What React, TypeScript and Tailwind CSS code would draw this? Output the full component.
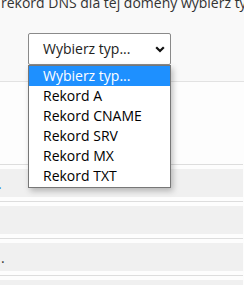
import React from "react";

const options = ["Wybierz typ...", "Rekord A", "Rekord CNAME", "Rekord SRV", "Rekord MX", "Rekord TXT"];

function Row({ mark }: { mark?: React.ReactNode }) {
  return (
    <div className="flex flex-col">
      <div className="h-px bg-[#dddddd] w-[243px]" />
      <div className="h-[4px]" />
      <div className="h-[28px] w-[243px] bg-[#f0f0f0] flex items-center text-[14px] leading-[20px] overflow-hidden">{mark}</div>
      <div className="h-[4px]" />
    </div>
  );
}

export default function App() {
  return (
    <div className="relative w-[244px] h-[285px] overflow-hidden bg-[#fdfdfd] font-['Open_Sans',sans-serif]">
      <div className="h-[81px] bg-[#f9f9f9] overflow-hidden">
        <p className="whitespace-nowrap text-[14px] leading-[20px] text-[#333333] -mt-[7px] pl-px">
          rekord DNS dla tej domeny wybierz typ rekordu
        </p>
        <div className="ml-[28px] mt-[20px] w-[143px] h-[32px] bg-white border border-[#8a8a8a] rounded-[2px] flex items-center justify-between pl-[14px] pr-[5px]">
          <span className="text-[14px] text-[#222222] leading-[20px]">Wybierz typ...</span>
          <svg width="10" height="7" viewBox="0 0 10 7">
            <path d="M1.2 1.2 L5 5 L8.8 1.2" fill="none" stroke="#111" strokeWidth="2.2" />
          </svg>
        </div>
      </div>
      <div className="h-px bg-[#e2e2e2]" />
      <div className="h-[82px]" />
      <Row mark={<span className="text-[#2a7ae2] -ml-[2px] mt-[2px]">.</span>} />
      <Row />
      <Row mark={<span className="text-[#333] ml-[1px] mt-[2px]">.</span>} />
      <Row />

      <div className="absolute left-[28px] top-[65px] w-[143px] h-[123px] bg-white border border-[#777777] shadow-[2px_3px_6px_rgba(0,0,0,0.25)] flex flex-col">
        {options.map((o, i) => (
          <div
            key={o}
            className={
              i === 0
                ? "h-[20px] bg-[#1e90ff] text-white text-[14px] leading-[20px] pl-[14px]"
                : "h-[20px] text-black text-[14px] leading-[20px] pl-[14px]"
            }
          >
            {o}
          </div>
        ))}
      </div>
    </div>
  );
}
